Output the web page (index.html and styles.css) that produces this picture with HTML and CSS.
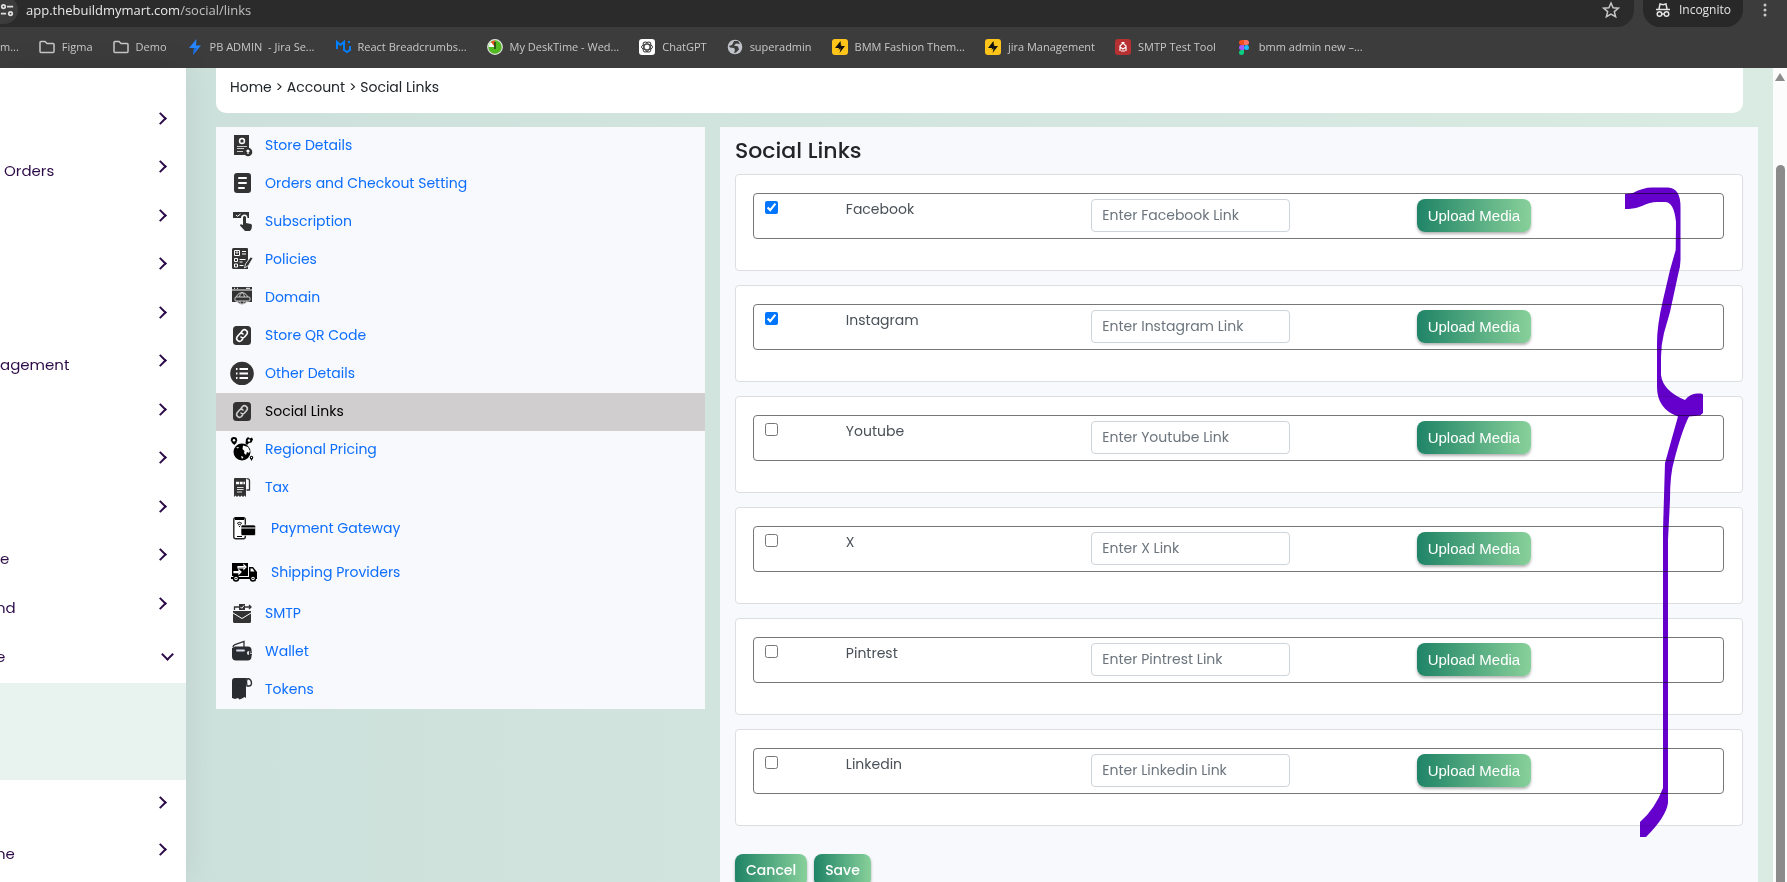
FILE: index.html
```html
<!DOCTYPE html>
<html lang="en">
<head>
  <meta charset="UTF-8" />
  <meta name="viewport" content="width=device-width, initial-scale=1.0"/>
  <title>Social Links</title>
  <link rel="stylesheet" href="styles.css">
</head>
<body>
  <header class="browser">
    <div class="toolbar">
      <div class="omnibox">
        <span class="site-info">
          <svg width="16" height="16" viewBox="0 0 16 16" fill="none" stroke="#dedede" stroke-width="2"><circle cx="4" cy="4" r="2"/><path d="M8 4h7M1 12h6"/><circle cx="12" cy="12" r="2"/></svg>
        </span>
        <span class="url">app.thebuildmymart.com<span class="path">/social/links</span></span>
        <svg class="star" width="18" height="18" viewBox="0 0 18 18" fill="none" stroke="#c7c7c7" stroke-width="1.5"><path d="M9 2l2.1 4.8 5.2.4-4 3.4 1.3 5.1L9 13l-4.6 2.7 1.3-5.1-4-3.4 5.2-.4z"/></svg>
      </div>
      <div class="incognito">
        <svg width="16" height="16" viewBox="0 0 16 16" fill="none" stroke="#e3e3e3" stroke-width="1.5"><path d="M4 7l1-5 3 .8L11 2l1 5M1 7.5h14"/><circle cx="4.5" cy="12" r="2.3"/><circle cx="11.5" cy="12" r="2.3"/><path d="M6.8 12h2.4"/></svg>
        <span>Incognito</span>
      </div>
      <svg class="dots" width="4" height="16" viewBox="0 0 4 16" fill="#c7c7c7"><circle cx="2" cy="3" r="1.5"/><circle cx="2" cy="8" r="1.5"/><circle cx="2" cy="13" r="1.5"/></svg>
    </div>

    <nav class="bookmarks">
      <a href="#">m...</a>
      <a href="#"><svg width="16" height="16" viewBox="0 0 16 16" fill="none" stroke="#c7c7c7" stroke-width="1.5"><path d="M1 3.5q0-1 1-1h4l2 2h6q1 0 1 1V12.5q0 1-1 1H2q-1 0-1-1z"/></svg>Figma</a>
      <a href="#"><svg width="16" height="16" viewBox="0 0 16 16" fill="none" stroke="#c7c7c7" stroke-width="1.5"><path d="M1 3.5q0-1 1-1h4l2 2h6q1 0 1 1V12.5q0 1-1 1H2q-1 0-1-1z"/></svg>Demo</a>
      <a href="#"><svg width="16" height="16" viewBox="0 0 16 16"><path fill="#2684ff" d="M9.5 0L2 9h5l-1 7 8-9.5H9z"/><path fill="#1868db" d="M7 9h3L6 16z"/></svg>PB ADMIN &nbsp;- Jira Se...</a>
      <a href="#"><svg width="16" height="16" viewBox="0 0 16 16" fill="none" stroke="#007fff" stroke-width="2"><path d="M2 10V3l3.5 3L9 3v6M9 8v3l3 2 3-2V7M14 4V2"/></svg>React Breadcrumbs...</a>
      <a href="#"><svg width="16" height="16" viewBox="0 0 16 16"><circle cx="8" cy="8" r="7.3" fill="#53b920" stroke="#e3e3e3" stroke-width="1.2"/><path fill="#fff" d="M8 8H1.5A6.5 6.5 0 0 1 4 3z"/><path fill="#ed4e28" d="M8 8L4 3a6.5 6.5 0 0 1 4-1.5z"/><path stroke="#173f10" stroke-width="1.5" d="M8 3v7"/></svg>My DeskTime - Wed...</a>
      <a href="#"><svg width="16" height="16" viewBox="0 0 16 16"><rect width="16" height="16" rx="3" fill="#fff"/><g fill="none" stroke="#444" stroke-width="1"><ellipse cx="8" cy="8" rx="5.5" ry="2.8"/><ellipse cx="8" cy="8" rx="5.5" ry="2.8" transform="rotate(60 8 8)"/><ellipse cx="8" cy="8" rx="5.5" ry="2.8" transform="rotate(120 8 8)"/></g></svg>ChatGPT</a>
      <a href="#"><svg width="16" height="16" viewBox="0 0 16 16"><circle cx="8" cy="8" r="7.3" fill="#bfc3c9"/><path fill="#3c3c3c" d="M7 2h4l2 3-4-.5-2 2 4 1 1 3-3 3-2 .5 1-3-1-2-4-.5L2 7l3-1z"/></svg>superadmin</a>
      <a href="#"><svg width="16" height="16" viewBox="0 0 16 16"><rect width="16" height="16" rx="3" fill="#ffc41a"/><path fill="#111" d="M8.5 2L3 9h4l-.5 2L9 9V7zM9.5 5L9 8l-1.5 6L13 7H9.5z"/></svg>BMM Fashion Them...</a>
      <a href="#"><svg width="16" height="16" viewBox="0 0 16 16"><rect width="16" height="16" rx="3" fill="#ffc41a"/><path fill="#111" d="M8.5 2L3 9h4l-.5 2L9 9V7zM9.5 5L9 8l-1.5 6L13 7H9.5z"/></svg>jira Management</a>
      <a href="#"><svg width="16" height="16" viewBox="0 0 16 16"><rect width="16" height="16" rx="3" fill="#b73132"/><path fill="none" stroke="#fff" stroke-width="1.2" d="M5 12V7l3-3 3 3v5M5 8l3 2 3-2M6.5 3.5h3M6 12h4"/></svg>SMTP Test Tool</a>
      <a href="#"><svg width="16" height="16" viewBox="0 0 16 16"><path fill="#f24e1e" d="M8 1H5.5a2.5 2.5 0 0 0 0 5H8z"/><path fill="#ff7262" d="M8 1h2.5a2.5 2.5 0 0 1 0 5H8z"/><path fill="#a259ff" d="M8 6H5.5a2.5 2.5 0 0 0 0 5H8z"/><circle cx="10.5" cy="8.5" r="2.5" fill="#1abcfe"/><path fill="#0acf83" d="M8 11H5.5A2.5 2.5 0 1 0 8 13.5z"/></svg>bmm admin new –...</a>
    </nav>
  </header>

  <div class="page">
    <aside class="sidebar">
      <a href="#" class="side-row"><span></span><i class="chevron"></i></a>
      <a href="#" class="side-row"><span class="indent">Orders</span><i class="chevron"></i></a>
      <a href="#" class="side-row"><span></span><i class="chevron"></i></a>
      <a href="#" class="side-row"><span></span><i class="chevron"></i></a>
      <a href="#" class="side-row"><span></span><i class="chevron"></i></a>
      <a href="#" class="side-row"><span>agement</span><i class="chevron"></i></a>
      <a href="#" class="side-row"><span></span><i class="chevron"></i></a>
      <a href="#" class="side-row"><span></span><i class="chevron"></i></a>
      <a href="#" class="side-row"><span></span><i class="chevron"></i></a>
      <a href="#" class="side-row"><span>e</span><i class="chevron"></i></a>
      <a href="#" class="side-row"><span class="cut">nd</span><i class="chevron"></i></a>
      <a href="#" class="side-row open"><span class="cut">e</span><i class="chevron down"></i></a>
      <div class="submenu"></div>
      <a href="#" class="side-row"><span></span><i class="chevron"></i></a>
      <a href="#" class="side-row"><span class="cut">ne</span><i class="chevron"></i></a>
    </aside>

    <main class="content">
      <div class="breadcrumb">Home &gt; Account &gt; Social Links</div>

      <div class="columns">
        <nav class="menu">
          <a href="#"><svg width="24" height="24" viewBox="0 0 24 24"><path fill="#333" d="M4 2h15v13a5 5 0 0 0-4 7H4z"/><circle cx="12" cy="8" r="3.2" fill="#fff"/><path fill="#333" d="M10.5 9.5v-2L12 6l1.5 1.5v2z"/><path stroke="#ccc" d="M7 13.5h10M7 15.5h7M7 18.5h6"/><circle cx="18" cy="19" r="4.3" fill="#333"/><path stroke="#fff" stroke-width="1.2" fill="none" d="M18 21v-4M16.5 18.5L18 17l1.5 1.5"/></svg>Store Details</a>
          <a href="#"><svg width="24" height="24" viewBox="0 0 24 24"><rect x="4" y="2" width="17" height="20" rx="3" fill="#333"/><path stroke="#fff" stroke-width="2" stroke-linecap="round" d="M9 7h7M9 12h7M9 17h5"/></svg>Orders and Checkout Setting</a>
          <a href="#"><svg width="24" height="24" viewBox="0 0 24 24"><path fill="#333" d="M3 3h16v6h-1.5c0-2-1-3.5-3-3.5S11 7 11 9H3z"/><path stroke="#fff" fill="none" d="M6 6l1.5 1.3 3-2.3"/><path fill="#333" d="M13 8q1.5-2 3 0v6l5 1q1 .5 1 1.5 0 4-2 5.5h-5l-5-5.5q0-2 3-.5z"/></svg>Subscription</a>
          <a href="#"><svg width="24" height="24" viewBox="0 0 24 24"><path fill="#333" d="M3.5 1H17q1 0 1 1v20H3.5Q2 22 2 20.5V2.5Q2 1 3.5 1z"/><g fill="none" stroke="#fff"><path d="M4.5 3.5h5v5h-5zM4.5 11.5h3v3h-3zM4.5 17h3v3h-3zM12 4.5h4M12 7h4M9.5 12.5h6M9.5 15h3M9.5 18.5h4"/><circle cx="7" cy="5.5" r=".8"/></g><path fill="#333" stroke="#f8f9fc" stroke-width=".8" d="M14.5 21l1-4 5-7 2.5 1-4.5 7.5z"/></svg>Policies</a>
          <a href="#"><svg width="24" height="24" viewBox="0 0 24 24"><path fill="#333" d="M2 2h20v2.5H2zM2 5.5h20V17H2z"/><path stroke="#fff" d="M4 3.3h1M7 3.3h1M16 3.3h4"/><g fill="#333" stroke="#ddd" stroke-width=".9"><circle cx="12" cy="13.5" r="5.8"/><ellipse cx="12" cy="13.5" rx="2.5" ry="5.8"/><rect x="5" y="12" width="15" height="4" rx="1"/></g></svg>Domain</a>
          <a href="#"><svg width="24" height="24" viewBox="0 0 24 24"><rect x="3" y="3" width="18" height="19" rx="3.5" fill="#333"/><path fill="none" stroke="#fff" stroke-width="1.6" stroke-linecap="round" d="M11 9.5l1.5-2a2.9 2.9 0 0 1 4.5 3.5l-2.5 3a2.6 2.6 0 0 1-3.5 0M13 15.5l-1.5 2A2.9 2.9 0 0 1 7 14l2.5-3a2.6 2.6 0 0 1 3.5 0"/></svg>Store QR Code</a>
          <a href="#"><svg width="24" height="24" viewBox="0 0 24 24"><circle cx="12" cy="12.5" r="11.8" fill="#333"/><path stroke="#fff" stroke-width="2" d="M6 8h1.5M9.5 8H18M6 12.5h1.5M9.5 12.5H18M6 17h1.5M9.5 17H18"/></svg>Other Details</a>
          <a href="#" class="active"><svg width="24" height="24" viewBox="0 0 24 24"><rect x="3" y="3" width="18" height="19" rx="3.5" fill="#333"/><path fill="none" stroke="#d0cece" stroke-width="1.6" stroke-linecap="round" d="M11 9.5l1.5-2a2.9 2.9 0 0 1 4.5 3.5l-2.5 3a2.6 2.6 0 0 1-3.5 0M13 15.5l-1.5 2A2.9 2.9 0 0 1 7 14l2.5-3a2.6 2.6 0 0 1 3.5 0"/></svg>Social Links</a>
          <a href="#"><svg width="24" height="24" viewBox="0 0 24 24"><circle cx="12" cy="15" r="8.5"/><path fill="#fff" d="M13 8.5l5 1.5 2 4-1 2-2-1-1 3-2-2 .5-2-2-2zM6 10.5l3-.5-1 1.5zM11 19l2.5 1-1.5 2z"/><path d="M4 0a3.2 3.2 0 0 1 3.2 3.2Q7 5.5 4.5 8 1 5.5.8 3.2A3.2 3.2 0 0 1 4 0z"/><circle cx="4" cy="3.2" r="1.2" fill="#fff"/><path d="M16 2l2-2 2 1.5L22 .5l1 2-1.5 3-2.5.5-2 2-1.5-1.5z"/><circle cx="19" cy="3.5" r="1.2" fill="#fff"/><circle cx="21.5" cy="20.5" r="1.7"/><path d="M20 21h3l-1.5 3z"/><circle cx="21.5" cy="20.5" r=".7" fill="#fff"/></svg>Regional Pricing</a>
          <a href="#"><svg width="24" height="24" viewBox="0 0 24 24"><path fill="#333" d="M5 3h11v19l-1.5-1.5L13 22l-1.5-1.5L10 22l-1.5-1.5L7 22l-1.5-1.5L4 22V4q0-1 1-1z"/><path fill="none" stroke="#333" stroke-width="1.3" d="M16.5 3.7q3 0 3 2V15h-3"/><path stroke="#fff" stroke-width="2.5" stroke-dasharray="3 .7" d="M6 8h9"/><path stroke="#ddd" d="M7 12.5h6.5M7 14.5h6.5M7 17h5"/></svg>Tax</a>
          <a href="#" class="big"><svg width="28" height="24" viewBox="0 0 28 24"><rect x="3.8" y="1.8" width="11.5" height="21" rx="2" fill="#fff" stroke="#222" stroke-width="1.4"/><path d="M5 1h9v3H5z"/><path fill="none" stroke="#000" d="M7 7.5q2.5-2.5 5 0M8 9q1.5-1.5 3 0M9.5 10v1M7 20.5h5"/><rect x="11" y="9" width="14.5" height="10.5" rx="1.5" stroke="#fff" stroke-width=".6"/><path stroke="#fff" d="M11 12h14"/></svg>Payment Gateway</a>
          <a href="#" class="big"><svg width="28" height="24" viewBox="0 0 28 24"><path d="M2 3h16v13H2z"/><path fill="none" stroke="#fff" stroke-width="1.2" d="M8 6.5h6V5l2 2-2 2V7.8H8zM4 11.5h5V10l2 2-2 2v-1.3H4z"/><path d="M19 7h4l4 5v7H1v-2h18z"/><path fill="#fff" d="M20.5 8.5h2l2 3h-4z"/><g fill="#fff" stroke="#000" stroke-width="1.5"><circle cx="6" cy="18.5" r="2.5"/><circle cx="23" cy="18.5" r="2.5"/></g><circle cx="6" cy="18.5" r=".8"/><circle cx="23" cy="18.5" r=".8"/></svg>Shipping Providers</a>
          <a href="#"><svg width="24" height="24" viewBox="0 0 24 24"><path fill="#333" d="M3 10h18v10.5q0 1.5-1.5 1.5h-15Q3 22 3 20.5zM9 3h6v6H9z"/><path fill="none" stroke="#fff" d="M10.5 6l1.3 1.3L14 4.5M3 12l9 5.5 9-5.5"/><path fill="none" stroke="#333" stroke-width="1.3" d="M4.5 9V6H9M15 6h6M19 4l2 2-2 2"/></svg>SMTP</a>
          <a href="#"><svg width="24" height="24" viewBox="0 0 24 24"><path fill="none" stroke="#292d32" stroke-width="1.3" d="M3 8q0-1.5 2-2.3L14 2.5V8"/><path fill="#292d32" d="M5 7.5h13q3.5 0 3.5 3.5v1h-2.5a2 2 0 0 0 0 4h2.5v1.5q0 4-4 4H6q-4 0-4-4V9z"/><path stroke="#dde" stroke-width="1.8" stroke-linecap="round" d="M7 11.5h7"/><path fill="none" stroke="#292d32" stroke-width="1.3" d="M22 13h-2.5v2.5H22"/></svg>Wallet</a>
          <a href="#"><svg width="24" height="24" viewBox="0 0 24 24"><path fill="#292d32" d="M5 1h13q-2 1-2 4v16l-1.5-1-2.5 1.5-2.5 1L8 21l-3 1-3-1V4q0-3 3-3z"/><path fill="none" stroke="#292d32" stroke-width="1.3" d="M17 9h2q2.5 0 2.5-3t-3-4.3H18q-1.5 1-1.5 3z"/></svg>Tokens</a>
        </nav>

        <form class="panel">
          <h1>Social Links</h1>

          <div class="card">
            <div class="link-row">
              <div><input type="checkbox" id="facebook" checked></div>
              <label for="facebook">Facebook</label>
              <div><input type="text" aria-label="Facebook link" placeholder="Enter Facebook Link"></div>
              <div><button type="button" class="btn upload">Upload Media</button></div>
            </div>
          </div>
          <div class="card">
            <div class="link-row">
              <div><input type="checkbox" id="instagram" checked></div>
              <label for="instagram">Instagram</label>
              <div><input type="text" aria-label="Instagram link" placeholder="Enter Instagram Link"></div>
              <div><button type="button" class="btn upload">Upload Media</button></div>
            </div>
          </div>
          <div class="card">
            <div class="link-row">
              <div><input type="checkbox" id="youtube"></div>
              <label for="youtube">Youtube</label>
              <div><input type="text" aria-label="Youtube link" placeholder="Enter Youtube Link"></div>
              <div><button type="button" class="btn upload">Upload Media</button></div>
            </div>
          </div>
          <div class="card">
            <div class="link-row">
              <div><input type="checkbox" id="x"></div>
              <label for="x">X</label>
              <div><input type="text" aria-label="X link" placeholder="Enter X Link"></div>
              <div><button type="button" class="btn upload">Upload Media</button></div>
            </div>
          </div>
          <div class="card">
            <div class="link-row">
              <div><input type="checkbox" id="pintrest"></div>
              <label for="pintrest">Pintrest</label>
              <div><input type="text" aria-label="Pintrest link" placeholder="Enter Pintrest Link"></div>
              <div><button type="button" class="btn upload">Upload Media</button></div>
            </div>
          </div>
          <div class="card">
            <div class="link-row">
              <div><input type="checkbox" id="linkedin"></div>
              <label for="linkedin">Linkedin</label>
              <div><input type="text" aria-label="Linkedin link" placeholder="Enter Linkedin Link"></div>
              <div><button type="button" class="btn upload">Upload Media</button></div>
            </div>
          </div>

          <div class="actions">
            <button type="button" class="btn">Cancel</button>
            <button type="submit" class="btn">Save</button>
          </div>

          <!-- marker brace over the rows -->
          <svg class="marker" width="78" height="650" viewBox="1625 187 78 650"><path fill="#6500cc" d="M1625 194L1633 193Q1643 187.5 1652 187.5H1668Q1680.5 188 1680.5 207V260Q1680.5 267 1678 275L1670 312L1664 333Q1661 345 1661 357V375Q1663 391 1685 400Q1690 393.5 1697 393.5H1701Q1703 393.5 1703 395V413L1700 415.5L1689 416.5Q1682 430 1674 461Q1670 474 1670 500L1668 540V803Q1666 817 1646 837H1640V822Q1655 809 1663 788V530L1665 463L1678 416.5Q1657 409 1657 387V343Q1657 325 1663 300L1670 270L1675.7 250L1676 222Q1674 202 1665 202H1657Q1650 202 1642 206Q1635 209 1629 209H1625Z"/></svg>
        </form>
      </div>
    </main>

    <div class="scrollbar">
      <svg width="10" height="8" viewBox="0 0 10 8"><path fill="#8b8b8b" d="M5 0l5 8H0z"/></svg>
      <div class="thumb"></div>
    </div>
  </div>
</body>
</html>
```
FILE: styles.css
```css
* {
  box-sizing: border-box;
}
body {
  margin: 0;
  height: 100vh;
  display: flex;
  flex-direction: column;
  overflow: hidden;
  font-family: Poppins, Inter, sans-serif;
  font-size: 14px;
  color: #212529;
}
a {
  text-decoration: none;
}

/* browser bar */
.browser {
  background: #3c3c3c;
  color: #c7c7c7;
  font-family: "Open Sans", sans-serif;
  font-size: 12px;
}
.toolbar {
  display: flex;
  height: 27px;
}
.omnibox {
  flex: 1;
  display: flex;
  align-items: center;
  padding: 0 14px 8px 0;
  background: #2b2b2b;
  border-radius: 0 0 17px 0;
}
.site-info {
  display: flex;
  align-items: center;
  justify-content: flex-end;
  width: 18px;
  height: 28px;
  margin-right: 8px;
  border-radius: 0 14px 14px 0;
  background: #3c3c3c;
  flex: none;
}
.site-info svg {
  margin-right: 4px;
}
.url {
  flex: 1;
  font-size: 13px;
  color: #e8e8e8;
}
.path {
  color: #c0c0c0;
}
.incognito {
  display: flex;
  align-items: center;
  gap: 8px;
  margin-left: 9px;
  padding: 0 12px 8px;
  background: #282828;
  color: #e3e3e3;
  border-radius: 0 0 17px 17px;
}
.dots {
  margin: 2px 20px 0;
}
.bookmarks {
  display: flex;
  align-items: center;
  gap: 20px;
  height: 41px;
  padding-bottom: 2px;
  font-size: 11px;
}
.bookmarks a {
  display: flex;
  align-items: center;
  gap: 7px;
  color: #c7c7c7;
  white-space: nowrap;
}

/* page */
.page {
  flex: 1;
  display: flex;
  min-height: 0;
  background: linear-gradient(to right, #cbdfda, #daebe3);
}
.sidebar {
  flex: none;
  width: 186px;
  padding-top: 26px;
  background: #fff;
  box-shadow: 0 0 30px rgba(0,0,0,0.08);
  overflow: hidden;
}
.side-row {
  display: flex;
  align-items: center;
  justify-content: space-between;
  height: 48px;
  padding-right: 21px;
  color: #2c0b48;
  font-size: 15px;
}
.side-row:nth-child(even) {
  height: 49px;
}
.side-row.open {
  height: 56px;
  padding-right: 14px;
  padding-bottom: 2px;
}
.side-row span {
  padding-top: 8px;
}
.side-row.open span {
  padding-top: 4px;
}
.side-row .indent {
  margin-left: 4px;
}
.side-row .cut {
  margin-left: -4px;
}
.chevron {
  width: 9px;
  height: 9px;
  border-top: 2px solid #2c0b48;
  border-right: 2px solid #2c0b48;
  transform: rotate(45deg);
}
.chevron.down {
  transform: rotate(135deg);
}
.submenu {
  height: 97px;
  background: #e8f3ef;
}
.submenu + .side-row {
  height: 45px;
}
.content {
  flex: 1;
  padding: 0 15px 0 30px;
  overflow: hidden;
}
.breadcrumb {
  height: 45px;
  margin-right: 15px;
  padding: 9px 14px;
  background: #fff;
  border-radius: 0 0 10px 10px;
}
.columns {
  display: grid;
  grid-template-columns: 489fr 1038fr;
  gap: 15px;
  align-items: start;
  margin-top: 14px;
}
.menu {
  background: #f8f9fc;
}
.menu a {
  display: flex;
  align-items: center;
  gap: 11px;
  height: 38px;
  padding: 0 14px 2px;
  color: #0d6efd;
}
.menu a.active {
  background: #d0cece;
  color: #000;
}
.menu a.big {
  gap: 13px;
  height: 44px;
}

/* form */
.panel {
  position: relative;
  padding: 9px 15px;
  background: #f8f9fc;
}
h1 {
  margin: 0 0 8px;
  font-size: 22px;
  font-weight: 500;
  line-height: 30px;
}
.card {
  height: 97px;
  margin-bottom: 14px;
  padding: 18px 18px 18px 17px;
  background: #fff;
  border: 1px solid #dcdee0;
  border-radius: 4px;
}
.link-row {
  display: grid;
  grid-template-columns: 81fr 246fr 326fr 318fr;
  height: 46px;
  padding-top: 5px;
  border: 1px solid #777;
  border-radius: 4px;
}
.link-row > * {
  padding-left: 11px;
  color: #495057;
}
.link-row input[type="checkbox"] {
  display: block;
  margin: 2px 0 0;
}
.link-row input[type="text"] {
  width: 199px;
  height: 33px;
  padding: 0 10px;
  border: 1px solid #ced4da;
  border-radius: 4px;
  font: inherit;
}
.link-row input::placeholder {
  color: #6c757d;
}
.btn {
  height: 33px;
  padding: 0 11px;
  border: none;
  border-radius: 8px;
  background: linear-gradient(to right, #1f8466, #88d09a);
  box-shadow: 0 2px 3px rgba(0,0,0,0.3);
  color: #fff;
  font: 500 14px Poppins, Inter, sans-serif;
}
.btn.upload {
  display: block;
  font: 15px "Liberation Sans", sans-serif;
}
.actions {
  display: flex;
  gap: 7px;
  margin-top: 28px;
  padding-bottom: 20px;
}
.marker {
  position: absolute;
  top: 60px;
  right: 55px;
  mix-blend-mode: multiply;
  pointer-events: none;
}

/* scrollbar */
.scrollbar {
  display: flex;
  flex-direction: column;
  align-items: center;
  width: 14px;
  padding-top: 5px;
  background: #fcfcfc;
}
.scrollbar svg {
  flex: none;
}
.thumb {
  flex: 1;
  width: 9px;
  margin-top: 84px;
  background: #8b8b8b;
  border-radius: 5px 5px 0 0;
}
```
